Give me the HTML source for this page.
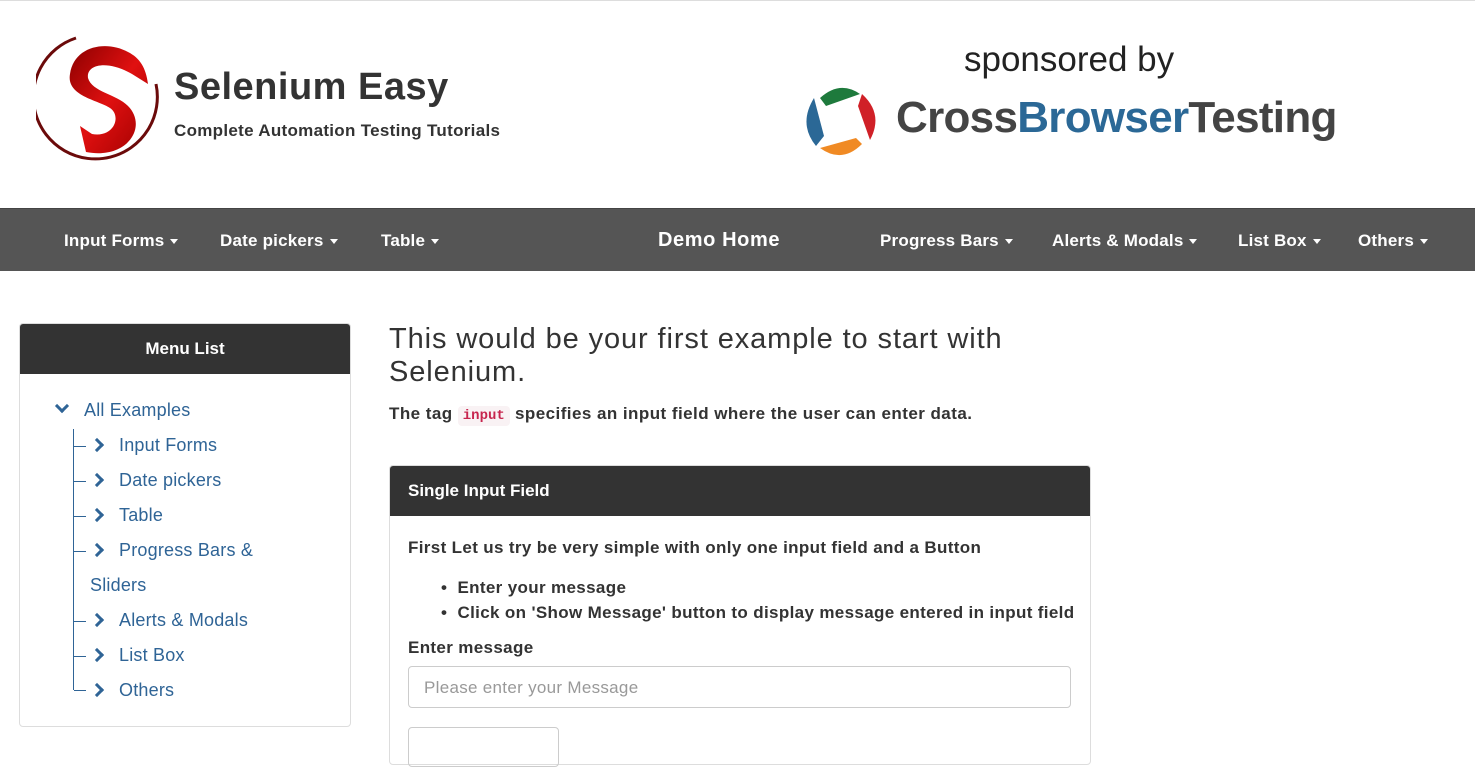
<!DOCTYPE html>
<html><head><meta charset="utf-8"><style>
*{box-sizing:border-box;margin:0;padding:0}
body{width:1475px;height:738px;overflow:hidden;background:#fff;font-family:"Liberation Sans",sans-serif;color:#333;position:relative}
.abs{position:absolute}
.nav{top:208px;left:0;width:1475px;height:63px;background:#555;border-top:1px solid #444}
.nav span{position:absolute;top:22px;color:#fff;font-size:17px;font-weight:bold;white-space:nowrap;letter-spacing:.2px}
.car{display:inline-block;width:0;height:0;border-left:4px solid transparent;border-right:4px solid transparent;border-top:5px solid #fff;vertical-align:middle;margin-left:6px}
.side{left:19px;top:323px;width:332px;height:404px;border:1px solid #ddd;border-radius:4px}
.sh{background:#333;color:#fff;height:50px;line-height:50px;text-align:center;font-weight:bold;font-size:17px;border-radius:3px 3px 0 0}
.it{position:absolute;color:#2f6496;font-size:18px;white-space:nowrap;letter-spacing:.2px}
.chev{position:absolute;width:10px;height:10px;border-right:3.5px solid #2f6496;border-top:3.5px solid #2f6496;transform:rotate(45deg)}
.tick{position:absolute;width:12px;height:1px;background:#2f6496;left:74px}
.b{font-size:17px;font-weight:bold;letter-spacing:.35px}
</style></head><body>
<div class="abs" style="top:0;left:0;width:1475px;height:1px;background:#ddd"></div>
<svg class="abs" style="left:36px;top:34px" width="128" height="128" viewBox="0 0 128 128">
<defs><linearGradient id="g" x1="0" y1="0" x2="1" y2="1"><stop offset="0" stop-color="#8b0000"/><stop offset=".5" stop-color="#e01010"/><stop offset="1" stop-color="#a00000"/></linearGradient></defs>
<path d="M40 4 A62 62 0 1 0 120 50" fill="none" stroke="#6b0a0a" stroke-width="3"/>
<path d="M92 18 C70 6 38 12 34 40 C30 62 62 66 74 74 C86 82 78 104 56 100 L44 92 L50 118 C92 126 112 92 92 72 C80 60 56 58 52 44 C50 30 72 26 96 40 L112 50 C110 34 104 24 92 18Z" fill="url(#g)"/>
</svg>
<div class="abs" style="left:174px;top:66px;font-size:38px;font-weight:bold;color:#333;letter-spacing:.5px">Selenium Easy</div>
<div class="abs" style="left:174px;top:121px;font-size:17px;font-weight:bold;color:#333;letter-spacing:.3px">Complete Automation Testing Tutorials</div>
<div class="abs" style="left:964px;top:40px;font-size:35px;color:#222">sponsored by</div>
<svg class="abs" style="left:800px;top:82px" width="82" height="80" viewBox="0 0 82 80">
<path d="M20 16 Q40 -2 60 12 L26 24Z" fill="#1e7a3c"/>
<path d="M62 12 Q84 32 70 58 L58 24Z" fill="#d02027"/>
<path d="M62 62 Q42 82 20 66 L56 56Z" fill="#f08a24"/>
<path d="M16 64 Q-2 42 14 16 L24 54Z" fill="#2b6896"/>
</svg>
<div class="abs" style="left:896px;top:93px;font-size:44px;font-weight:bold;color:#444;letter-spacing:-.7px">Cross<span style="color:#2b6896">Browser</span>Testing</div>
<div class="abs nav">
<span style="left:64px">Input Forms<i class="car"></i></span>
<span style="left:220px">Date pickers<i class="car"></i></span>
<span style="left:381px">Table<i class="car"></i></span>
<span style="left:658px;top:20px;font-size:20px;letter-spacing:.6px">Demo Home</span>
<span style="left:880px">Progress Bars<i class="car"></i></span>
<span style="left:1052px">Alerts &amp; Modals<i class="car"></i></span>
<span style="left:1238px">List Box<i class="car"></i></span>
<span style="left:1358px">Others<i class="car"></i></span>
</div>
<div class="abs side"><div class="sh">Menu List</div></div>
<div class="chev" style="left:57px;top:401px;transform:rotate(135deg)"></div>
<div class="it" style="left:84px;top:400px">All Examples</div>
<div class="abs" style="left:73px;top:429px;width:1px;height:261px;background:#2f6496"></div>
<div class="tick" style="top:446px"></div><div class="chev" style="left:92px;top:440px"></div><div class="it" style="left:119px;top:435px">Input Forms</div>
<div class="tick" style="top:481px"></div><div class="chev" style="left:92px;top:475px"></div><div class="it" style="left:119px;top:470px">Date pickers</div>
<div class="tick" style="top:516px"></div><div class="chev" style="left:92px;top:510px"></div><div class="it" style="left:119px;top:505px">Table</div>
<div class="tick" style="top:551px"></div><div class="chev" style="left:92px;top:545px"></div><div class="it" style="left:119px;top:540px">Progress Bars &amp;</div>
<div class="it" style="left:90px;top:575px">Sliders</div>
<div class="tick" style="top:621px"></div><div class="chev" style="left:92px;top:615px"></div><div class="it" style="left:119px;top:610px">Alerts &amp; Modals</div>
<div class="tick" style="top:656px"></div><div class="chev" style="left:92px;top:650px"></div><div class="it" style="left:119px;top:645px">List Box</div>
<div class="tick" style="top:690px"></div><div class="chev" style="left:92px;top:685px"></div><div class="it" style="left:119px;top:680px">Others</div>
<div class="abs" style="left:389px;top:323px;font-size:29px;line-height:33px;color:#333;width:700px;letter-spacing:.9px">This would be your first example to start with<br>Selenium.</div>
<div class="abs b" style="left:389px;top:404px;letter-spacing:.45px">The tag <code style="font-family:'Liberation Mono',monospace;font-size:14px;color:#c7254e;background:#f9f2f4;padding:2px 5px;border-radius:4px;letter-spacing:0">input</code> specifies an input field where the user can enter data.</div>
<div class="abs" style="left:389px;top:465px;width:702px;height:300px;border:1px solid #ddd;border-radius:4px">
<div style="background:#333;color:#fff;height:50px;line-height:50px;padding-left:18px;font-weight:bold;font-size:17px;border-radius:3px 3px 0 0">Single Input Field</div>
</div>
<div class="abs b" style="left:408px;top:538px">First Let us try be very simple with only one input field and a Button</div>
<div class="abs b" style="left:441px;top:575px;line-height:25px">• &nbsp;Enter your message<br>• &nbsp;Click on 'Show Message' button to display message entered in input field</div>
<div class="abs b" style="left:408px;top:638px">Enter message</div>
<div class="abs" style="left:408px;top:666px;width:663px;height:42px;border:1px solid #ccc;border-radius:4px;padding:11px 15px;font-size:17px;color:#999;letter-spacing:.3px">Please enter your Message</div>
<div class="abs" style="left:408px;top:727px;width:151px;height:40px;border:1px solid #ccc;border-radius:4px"></div>
</body></html>
